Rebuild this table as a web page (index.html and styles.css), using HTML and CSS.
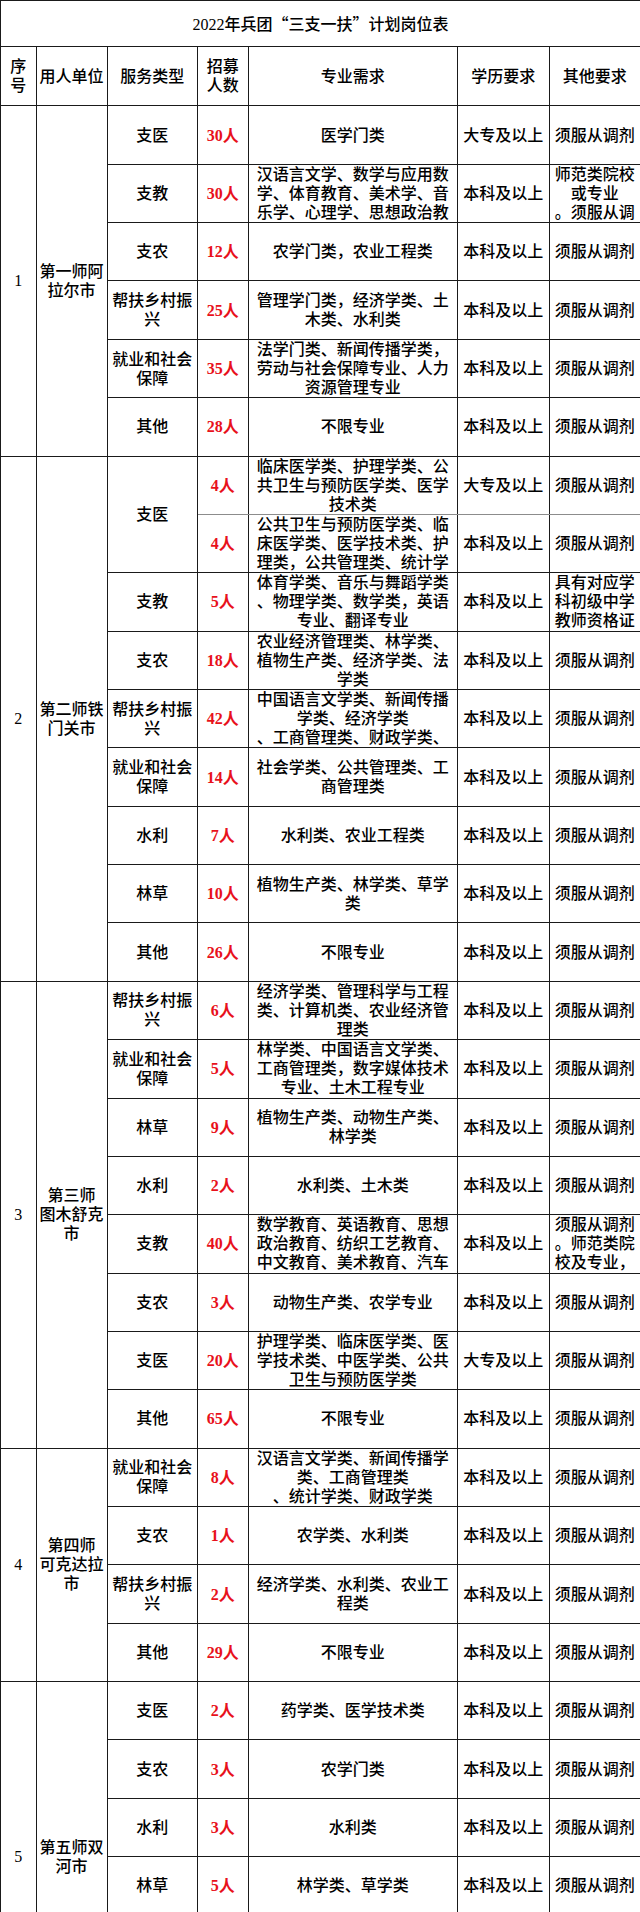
FILE: index.html
```html
<!DOCTYPE html>
<html lang="zh-CN">
<head>
<meta charset="utf-8">
<title>2022年兵团“三支一扶”计划岗位表</title>
<link rel="stylesheet" href="styles.css">
</head>
<body>
<table class="sheet">
<colgroup>
<col class="c-no"><col class="c-unit"><col class="c-type"><col class="c-num"><col class="c-major"><col class="c-edu"><col class="c-other">
</colgroup>
<thead>
<tr class="r-title"><th colspan="7">2022年兵团<span class="q">“</span>三支一扶<span class="q">”</span>计划岗位表</th></tr>
<tr class="r-head"><th>序<br>号</th><th>用人单位</th><th>服务类型</th><th>招募<br>人数</th><th>专业需求</th><th>学历要求</th><th>其他要求</th></tr>
</thead>
<tbody class="grp">
<tr><td rowspan="6">1</td><td rowspan="6">第一师阿<br>拉尔市</td><td>支医</td><td class="num">30人</td><td>医学门类</td><td>大专及以上</td><td>须服从调剂</td></tr>
<tr><td>支教</td><td class="num">30人</td><td>汉语言文学、数学与应用数<br>学、体育教育、美术学、音<br>乐学、心理学、思想政治教</td><td>本科及以上</td><td>师范类院校<br>或专业<br>。须服从调</td></tr>
<tr><td>支农</td><td class="num">12人</td><td>农学门类，农业工程类</td><td>本科及以上</td><td>须服从调剂</td></tr>
<tr><td>帮扶乡村振<br>兴</td><td class="num">25人</td><td>管理学门类，经济学类、土<br>木类、水利类</td><td>本科及以上</td><td>须服从调剂</td></tr>
<tr><td>就业和社会<br>保障</td><td class="num">35人</td><td>法学门类、新闻传播学类，<br>劳动与社会保障专业、人力<br>资源管理专业</td><td>本科及以上</td><td>须服从调剂</td></tr>
<tr><td>其他</td><td class="num">28人</td><td>不限专业</td><td>本科及以上</td><td>须服从调剂</td></tr>
</tbody>
<tbody class="grp">
<tr><td rowspan="9">2</td><td rowspan="9">第二师铁<br>门关市</td><td rowspan="2">支医</td><td class="num soft">4人</td><td class="soft">临床医学类、护理学类、公<br>共卫生与预防医学类、医学<br>技术类</td><td class="soft">大专及以上</td><td class="soft">须服从调剂</td></tr>
<tr><td class="num">4人</td><td>公共卫生与预防医学类、临<br>床医学类、医学技术类、护<br>理类，公共管理类、统计学</td><td>本科及以上</td><td>须服从调剂</td></tr>
<tr><td>支教</td><td class="num">5人</td><td>体育学类、音乐与舞蹈学类<br>、物理学类、数学类，英语<br>专业、翻译专业</td><td>本科及以上</td><td>具有对应学<br>科初级中学<br>教师资格证</td></tr>
<tr><td>支农</td><td class="num">18人</td><td>农业经济管理类、林学类、<br>植物生产类、经济学类、法<br>学类</td><td>本科及以上</td><td>须服从调剂</td></tr>
<tr><td>帮扶乡村振<br>兴</td><td class="num">42人</td><td>中国语言文学类、新闻传播<br>学类、经济学类<br>、工商管理类、财政学类、</td><td>本科及以上</td><td>须服从调剂</td></tr>
<tr><td>就业和社会<br>保障</td><td class="num">14人</td><td>社会学类、公共管理类、工<br>商管理类</td><td>本科及以上</td><td>须服从调剂</td></tr>
<tr><td>水利</td><td class="num">7人</td><td>水利类、农业工程类</td><td>本科及以上</td><td>须服从调剂</td></tr>
<tr><td>林草</td><td class="num">10人</td><td>植物生产类、林学类、草学<br>类</td><td>本科及以上</td><td>须服从调剂</td></tr>
<tr><td>其他</td><td class="num">26人</td><td>不限专业</td><td>本科及以上</td><td>须服从调剂</td></tr>
</tbody>
<tbody class="grp">
<tr><td rowspan="8">3</td><td rowspan="8">第三师<br>图木舒克<br>市</td><td>帮扶乡村振<br>兴</td><td class="num">6人</td><td>经济学类、管理科学与工程<br>类、计算机类、农业经济管<br>理类</td><td>本科及以上</td><td>须服从调剂</td></tr>
<tr><td>就业和社会<br>保障</td><td class="num">5人</td><td>林学类、中国语言文学类、<br>工商管理类，数字媒体技术<br>专业、土木工程专业</td><td>本科及以上</td><td>须服从调剂</td></tr>
<tr><td>林草</td><td class="num">9人</td><td>植物生产类、动物生产类、<br>林学类</td><td>本科及以上</td><td>须服从调剂</td></tr>
<tr><td>水利</td><td class="num">2人</td><td>水利类、土木类</td><td>本科及以上</td><td>须服从调剂</td></tr>
<tr><td>支教</td><td class="num">40人</td><td>数学教育、英语教育、思想<br>政治教育、纺织工艺教育、<br>中文教育、美术教育、汽车</td><td>本科及以上</td><td>须服从调剂<br>。师范类院<br>校及专业，</td></tr>
<tr><td>支农</td><td class="num">3人</td><td>动物生产类、农学专业</td><td>本科及以上</td><td>须服从调剂</td></tr>
<tr><td>支医</td><td class="num">20人</td><td>护理学类、临床医学类、医<br>学技术类、中医学类、公共<br>卫生与预防医学类</td><td>大专及以上</td><td>须服从调剂</td></tr>
<tr><td>其他</td><td class="num">65人</td><td>不限专业</td><td>本科及以上</td><td>须服从调剂</td></tr>
</tbody>
<tbody class="grp">
<tr><td rowspan="4">4</td><td rowspan="4">第四师<br>可克达拉<br>市</td><td>就业和社会<br>保障</td><td class="num">8人</td><td>汉语言文学类、新闻传播学<br>类、工商管理类<br>、统计学类、财政学类</td><td>本科及以上</td><td>须服从调剂</td></tr>
<tr><td>支农</td><td class="num">1人</td><td>农学类、水利类</td><td>本科及以上</td><td>须服从调剂</td></tr>
<tr><td>帮扶乡村振<br>兴</td><td class="num">2人</td><td>经济学类、水利类、农业工<br>程类</td><td>本科及以上</td><td>须服从调剂</td></tr>
<tr><td>其他</td><td class="num">29人</td><td>不限专业</td><td>本科及以上</td><td>须服从调剂</td></tr>
</tbody>
<tbody class="grp">
<tr><td rowspan="6">5</td><td rowspan="6">第五师双<br>河市</td><td>支医</td><td class="num">2人</td><td>药学类、医学技术类</td><td>本科及以上</td><td>须服从调剂</td></tr>
<tr><td>支农</td><td class="num">3人</td><td>农学门类</td><td>本科及以上</td><td>须服从调剂</td></tr>
<tr><td>水利</td><td class="num">3人</td><td>水利类</td><td>本科及以上</td><td>须服从调剂</td></tr>
<tr><td>林草</td><td class="num">5人</td><td>林学类、草学类</td><td>本科及以上</td><td>须服从调剂</td></tr>
<tr><td></td><td class="num"></td><td></td><td></td><td></td></tr>
<tr><td></td><td class="num"></td><td></td><td></td><td></td></tr>
</tbody>
</table>
</body>
</html>
```

FILE: styles.css
```css
html, body {
  margin: 0;
  padding: 0;
  background: #ffffff;
}

.sheet {
  width: 640px;
  table-layout: fixed;
  border-collapse: collapse;
  font-family: "Liberation Serif", "Noto Sans CJK SC", serif;
  font-size: 16px;
  line-height: 19px;
  color: #000000;
}

.c-no { width: 35.5px; }
.c-unit { width: 71px; }
.c-type { width: 90.5px; }
.c-num { width: 50.5px; }
.c-major { width: 209.5px; }
.c-edu { width: 91.5px; }
.c-other { width: 91.5px; }

.sheet th,
.sheet td {
  border: 1px solid #1a1a1a;
  padding: 0;
  text-align: center;
  vertical-align: middle;
  font-weight: 500;
  overflow: hidden;
  white-space: nowrap;
}

.r-title { height: 46px; }
.r-head { height: 59.4px; }
.grp tr { height: 58.37px; }

.q {
  font-family: "Noto Sans CJK SC", sans-serif;
  font-feature-settings: "fwid";
}

.sheet .num {
  color: #e8111b;
  font-weight: 700;
}

.sheet .soft {
  border-bottom-color: #8c8c8c;
}
```
